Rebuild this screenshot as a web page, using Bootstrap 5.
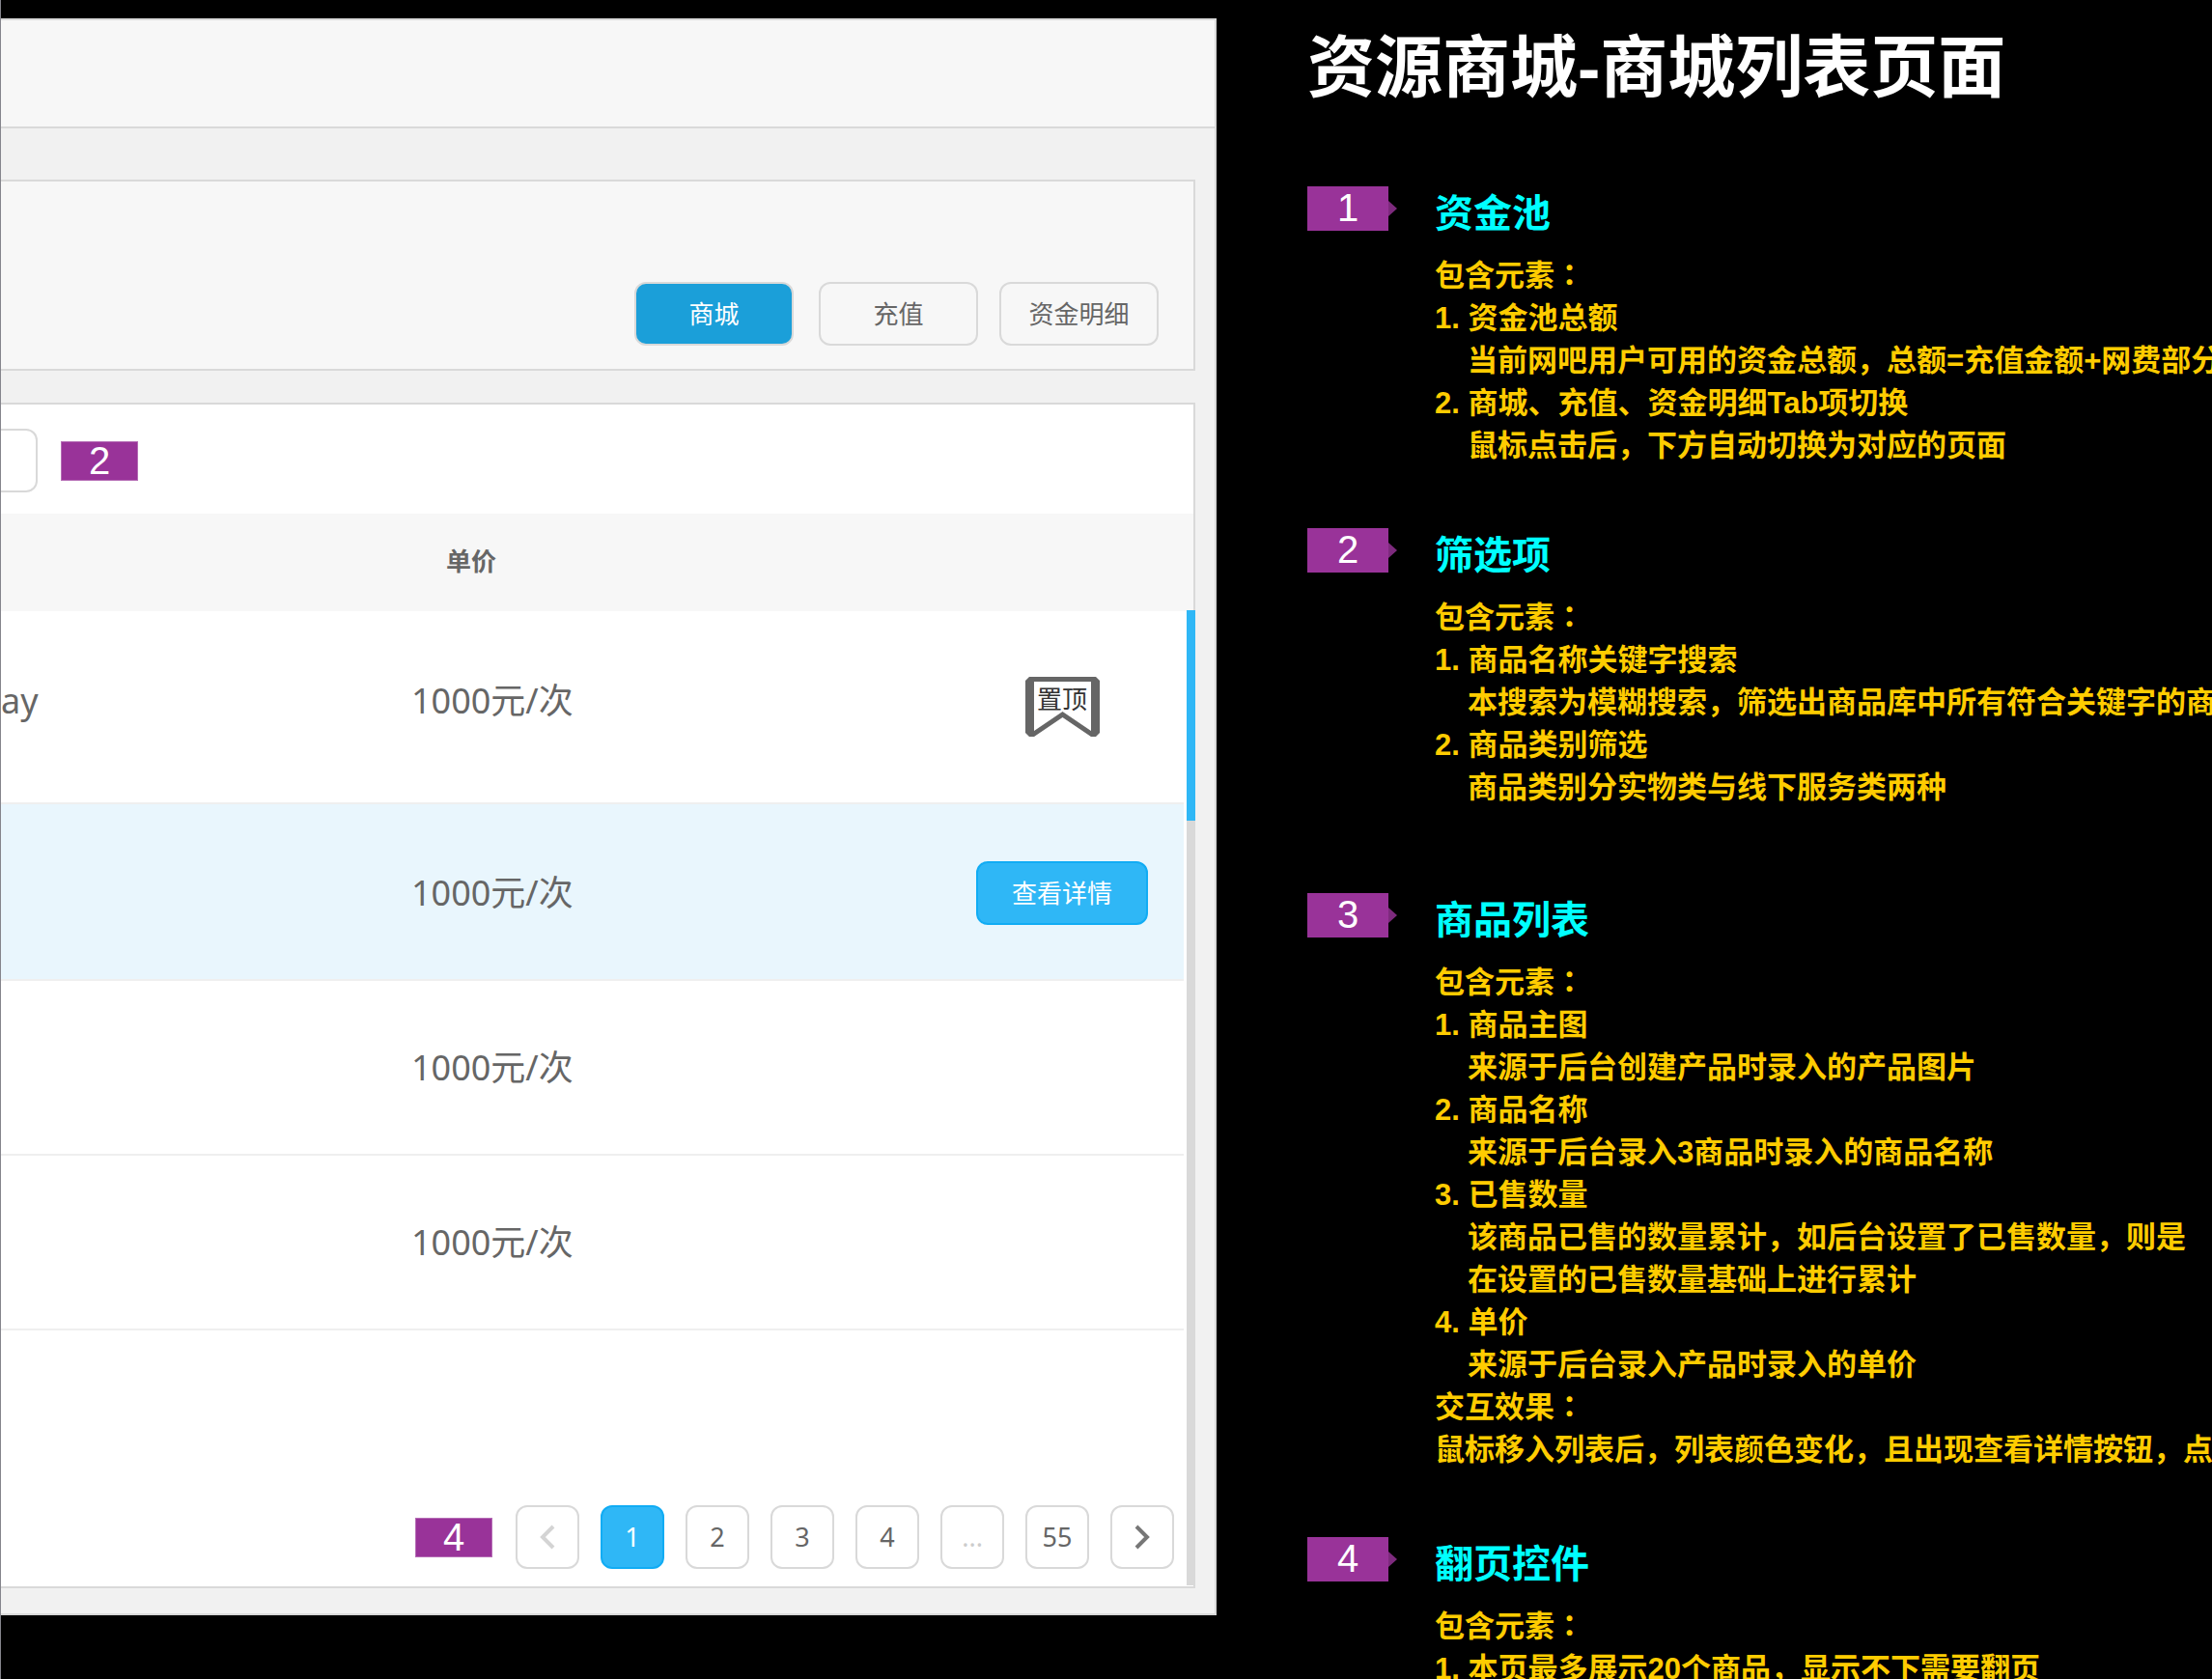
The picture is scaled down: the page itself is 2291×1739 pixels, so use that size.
<!DOCTYPE html>
<html lang="zh-CN">
<head>
<meta charset="utf-8">
<meta name="viewport" content="width=device-width, initial-scale=1">
<title>资源商城-商城列表页面</title>
<link href="https://cdn.jsdelivr.net/npm/bootstrap@5.3.0/dist/css/bootstrap.min.css" rel="stylesheet">
<style>
  body { background: #000; font-family: "Noto Sans", "Noto Sans CJK SC", sans-serif; color: #666; font-size: 26px; }
  .mock { flex: 0 0 55%; border-left: 1px solid #85858c; padding: 19px 0 66px; }
  .window { background: #f1f1f1; border: 2px solid #d9d9d9; border-left: 0; }
  .window-top { height: 112px; background: #f7f7f7; border-bottom: 2px solid #d9d9d9; }
  .window-body { padding: 53px 20px 26px 0; gap: 33px; }
  .pane { border: 2px solid #d9d9d9; border-left: 0; background: #fff; }
  .pool { background: #f7f7f7; padding: 104px 36px 24px; gap: 22px; }

  .box-btn { --bs-btn-padding-x: 0; --bs-btn-padding-y: 0; --bs-btn-font-size: 26px; --bs-btn-border-width: 2px; --bs-btn-border-radius: 12px;
    --bs-btn-color: #666; --bs-btn-border-color: #d9d9d9; height: 66px; }
  .box-btn.current { --bs-btn-color: #fff; --bs-btn-bg: #1b9fd9; }
  .box-btn.bright { --bs-btn-color: #fff; --bs-btn-bg: #2fb7f6; --bs-btn-border-color: #11acf4; }
  .tab-btn { width: 165px; }
  .detail-btn { width: 178px; }
  .page-btn { --bs-btn-font-size: 27px; width: 66px; }
  .page-btn.faint { --bs-btn-color: #ccc; }

  .filters { padding: 25px 0 22px; gap: 24px; }
  .filters input { width: 38px; height: 66px; border: 2px solid #d9d9d9; border-left: 0; border-radius: 0 12px 12px 0; background: #fff; }
  .marker { background: #939; color: #fff; width: 80px; height: 41px; font: 40px/39px "Liberation Sans", sans-serif; text-align: center; border: 1px solid #b56db5; }

  .goods { table-layout: fixed; width: 100%; font-size: 36px; line-height: 40px; }
  .goods th { height: 101px; background: #f7f7f7; font-size: 26px; padding: 0 0 4px; }
  .goods th.price { padding-left: 36px; }
  .goods td { height: 181px; padding: 0; border-bottom: 2px solid #efefef; }
  .goods .pinned td { height: 199px; }
  .goods .pinned td.raised { padding-bottom: 12px; }
  .goods .hovered td { height: 183px; padding-top: 3px; background: #e9f6fd; }
  .goods td.gutter { border: 0; background: #fff; }
  .col-name { width: 425px; }
  .col-action { width: 252px; }
  .col-gutter { width: 10px; }
  .pin { width: 77px; height: 62px; font-size: 26px; line-height: 46px; color: #333; }
  .scroll-track { top: 213px; bottom: 1px; right: -2px; width: 9px; background: #d9d9d9; }
  .scroll-thumb { height: 218px; background: #2fb7f6; }
  .pager { padding: 0 20px 18px; gap: 22px; }
  .pager .marker { margin-right: 2px; }

  .notes { padding: 21px 0 0 94px; font-family: "Liberation Sans", "Noto Sans CJK SC", sans-serif; font-weight: 700; }
  .notes h1 { font-size: 70px; line-height: 100px; font-weight: 700; color: #fff; margin-bottom: 72px; }
  .note { gap: 48px; margin-bottom: 63px; }
  .note.wide { margin-bottom: 87px; }
  .note.roomy { margin-bottom: 68px; }
  .flag { width: 84px; height: 46px; background: #939; color: #fff; font-size: 40px; line-height: 44px; font-weight: 400; text-align: center; }
  .flag::after { content: ""; position: absolute; left: 100%; top: 15px; border: 8px solid transparent; border-left: 9px solid #7d2a7d; border-right: 0; }
  .note h2 { font-size: 40px; line-height: 56px; font-weight: 700; color: #0ff; margin-bottom: 15px; }
  .note-text { font-size: 31px; line-height: 44px; color: #fc0; white-space: nowrap; }
  .note-text p { margin: 0; }
  .note-text .sub { padding-left: 34px; }
  .colon { font-family: "Noto Sans CJK JP", sans-serif; line-height: 1; }
</style>
<script src="https://cdn.jsdelivr.net/npm/bootstrap@5.3.0/dist/js/bootstrap.bundle.min.js"></script>
</head>
<body>
<div class="d-flex vh-100 overflow-hidden">
  <main class="mock d-flex flex-column">
    <div class="window flex-grow-1 d-flex flex-column">
      <div class="window-top flex-shrink-0"></div>
      <div class="window-body flex-grow-1 d-flex flex-column">
        <nav class="pane pool d-flex justify-content-end" aria-label="资金池">
          <button type="button" class="btn box-btn tab-btn current me-1">商城</button>
          <button type="button" class="btn box-btn tab-btn">充值</button>
          <button type="button" class="btn box-btn tab-btn">资金明细</button>
        </nav>
        <section class="pane position-relative flex-grow-1 d-flex flex-column">
          <div class="filters d-flex align-items-center">
            <input type="text" aria-label="商品类别">
            <span class="marker">2</span>
          </div>
          <table class="goods">
            <colgroup><col class="col-name"><col><col class="col-action"><col class="col-gutter"></colgroup>
            <thead>
              <tr><th></th><th class="price">单价</th><th></th><th></th></tr>
            </thead>
            <tbody>
              <tr class="pinned">
                <td class="raised">ay</td><td class="raised">1000元/次</td>
                <td>
                  <div class="pin position-relative mx-auto text-center">
                    <svg class="position-absolute top-0 start-0" width="77" height="62" viewBox="0 0 77 62" aria-hidden="true">
                      <path fill="#666" fill-rule="evenodd" d="M4 0H73L77 4V58L73 62H68L38.500 42L9 62H4L0 58V4ZM9 5V56L38.500 36L68 56V5Z"/>
                    </svg>
                    <span class="position-relative">置顶</span>
                  </div>
                </td>
                <td class="gutter" rowspan="4"></td>
              </tr>
              <tr class="hovered">
                <td></td><td>1000元/次</td>
                <td class="text-center"><button type="button" class="btn box-btn bright detail-btn">查看详情</button></td>
              </tr>
              <tr><td></td><td>1000元/次</td><td></td></tr>
              <tr><td></td><td>1000元/次</td><td></td></tr>
            </tbody>
          </table>
          <nav class="pager mt-auto d-flex align-items-center justify-content-end" aria-label="翻页">
            <span class="marker">4</span>
            <button type="button" class="btn box-btn page-btn" aria-label="上一页"><svg class="d-block mx-auto" width="16" height="26" viewBox="0 0 16 26" fill="none" stroke="#d4d4d4" stroke-width="4"><path d="M14 2L3 13L14 24"/></svg></button>
            <button type="button" class="btn box-btn page-btn bright">1</button>
            <button type="button" class="btn box-btn page-btn">2</button>
            <button type="button" class="btn box-btn page-btn">3</button>
            <button type="button" class="btn box-btn page-btn">4</button>
            <button type="button" class="btn box-btn page-btn faint">...</button>
            <button type="button" class="btn box-btn page-btn">55</button>
            <button type="button" class="btn box-btn page-btn" aria-label="下一页"><svg class="d-block mx-auto" width="16" height="26" viewBox="0 0 16 26" fill="none" stroke="#777" stroke-width="4"><path d="M2 2L13 13L2 24"/></svg></button>
          </nav>
          <div class="scroll-track position-absolute"><div class="scroll-thumb"></div></div>
        </section>
      </div>
    </div>
  </main>

  <aside class="notes flex-grow-1 overflow-hidden">
    <h1 class="text-nowrap">资源商城-商城列表页面</h1>
    <section class="note d-flex">
      <div class="flag position-relative flex-shrink-0">1</div>
      <div>
        <h2>资金池</h2>
        <div class="note-text">
          <p>包含元素<span class="colon" lang="ja">：</span></p>
          <p>1. 资金池总额</p>
          <p class="sub">当前网吧用户可用的资金总额，总额=充值金额+网费部分</p>
          <p>2. 商城、充值、资金明细Tab项切换</p>
          <p class="sub">鼠标点击后，下方自动切换为对应的页面</p>
        </div>
      </div>
    </section>
    <section class="note wide d-flex">
      <div class="flag position-relative flex-shrink-0">2</div>
      <div>
        <h2>筛选项</h2>
        <div class="note-text">
          <p>包含元素<span class="colon" lang="ja">：</span></p>
          <p>1. 商品名称关键字搜索</p>
          <p class="sub">本搜索为模糊搜索，筛选出商品库中所有符合关键字的商</p>
          <p>2. 商品类别筛选</p>
          <p class="sub">商品类别分实物类与线下服务类两种</p>
        </div>
      </div>
    </section>
    <section class="note roomy d-flex">
      <div class="flag position-relative flex-shrink-0">3</div>
      <div>
        <h2>商品列表</h2>
        <div class="note-text">
          <p>包含元素<span class="colon" lang="ja">：</span></p>
          <p>1. 商品主图</p>
          <p class="sub">来源于后台创建产品时录入的产品图片</p>
          <p>2. 商品名称</p>
          <p class="sub">来源于后台录入3商品时录入的商品名称</p>
          <p>3. 已售数量</p>
          <p class="sub">该商品已售的数量累计，如后台设置了已售数量，则是</p>
          <p class="sub">在设置的已售数量基础上进行累计</p>
          <p>4. 单价</p>
          <p class="sub">来源于后台录入产品时录入的单价</p>
          <p>交互效果<span class="colon" lang="ja">：</span></p>
          <p>鼠标移入列表后，列表颜色变化，且出现查看详情按钮，点击</p>
        </div>
      </div>
    </section>
    <section class="note d-flex">
      <div class="flag position-relative flex-shrink-0">4</div>
      <div>
        <h2>翻页控件</h2>
        <div class="note-text">
          <p>包含元素<span class="colon" lang="ja">：</span></p>
          <p>1. 本页最多展示20个商品，显示不下需要翻页</p>
        </div>
      </div>
    </section>
  </aside>
</div>
</body>
</html>
